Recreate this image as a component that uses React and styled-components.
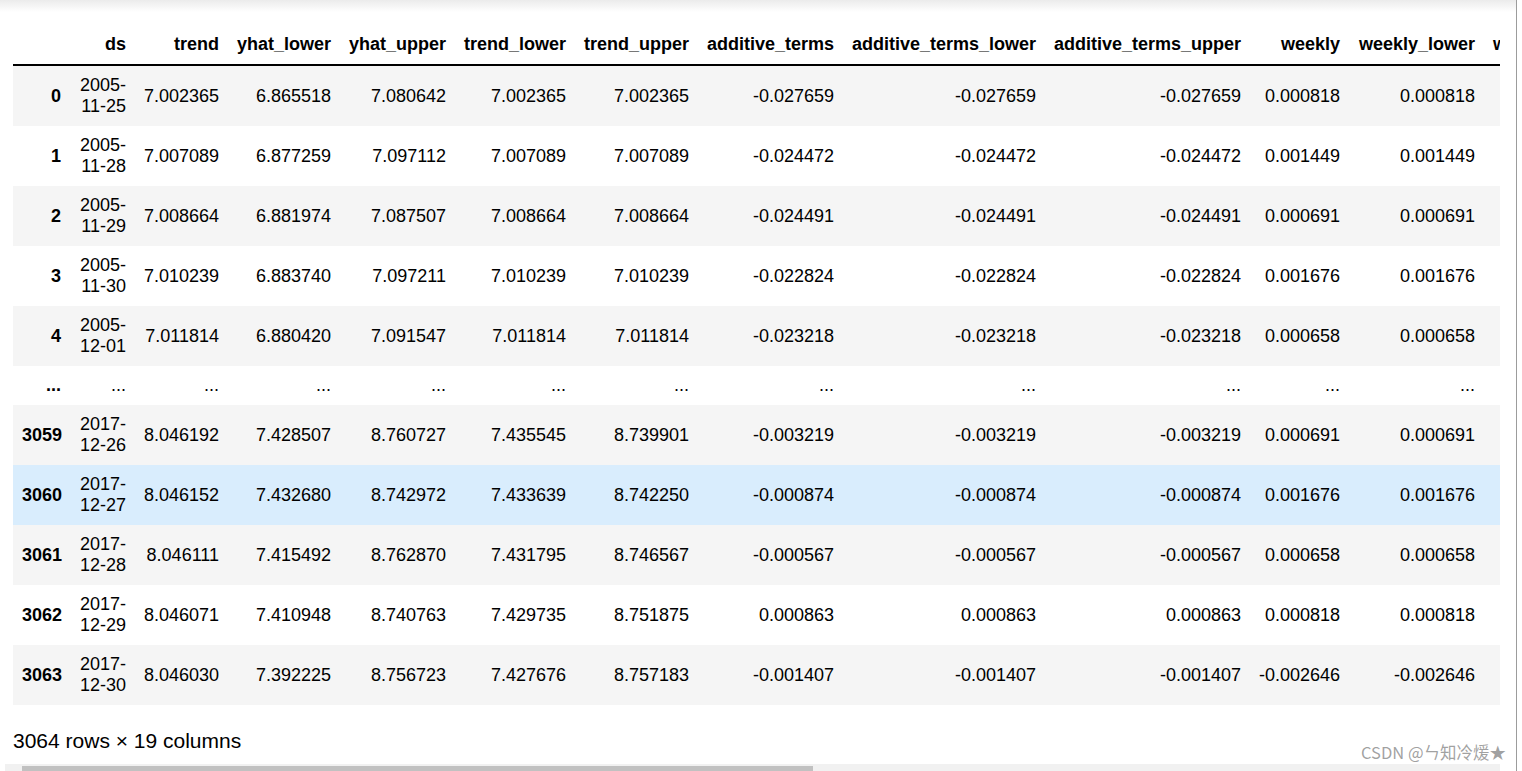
import React from 'react';
import styled, { createGlobalStyle } from 'styled-components';

const GlobalStyle = createGlobalStyle`
  html, body {
    margin: 0;
    padding: 0;
    background: #fff;
  }
  body {
    font-family: "Liberation Sans", Arial, sans-serif;
    color: #000;
    overflow: hidden;
  }
`;

const columns = [
  { name: 'ds', width: 65 },
  { name: 'trend', width: 93 },
  { name: 'yhat_lower', width: 112 },
  { name: 'yhat_upper', width: 115 },
  { name: 'trend_lower', width: 120 },
  { name: 'trend_upper', width: 123 },
  { name: 'additive_terms', width: 145 },
  { name: 'additive_terms_lower', width: 202 },
  { name: 'additive_terms_upper', width: 205 },
  { name: 'weekly', width: 99 },
  { name: 'weekly_lower', width: 135 },
  { name: 'weekly_upper', width: 136 },
];

// [index, ds, trend, yhat_lower, yhat_upper, trend_lower, trend_upper, additive, weekly]
const raw = [
  ['0', '2005-11-25', '7.002365', '6.865518', '7.080642', '7.002365', '7.002365', '-0.027659', '0.000818'],
  ['1', '2005-11-28', '7.007089', '6.877259', '7.097112', '7.007089', '7.007089', '-0.024472', '0.001449'],
  ['2', '2005-11-29', '7.008664', '6.881974', '7.087507', '7.008664', '7.008664', '-0.024491', '0.000691'],
  ['3', '2005-11-30', '7.010239', '6.883740', '7.097211', '7.010239', '7.010239', '-0.022824', '0.001676'],
  ['4', '2005-12-01', '7.011814', '6.880420', '7.091547', '7.011814', '7.011814', '-0.023218', '0.000658'],
  null,
  ['3059', '2017-12-26', '8.046192', '7.428507', '8.760727', '7.435545', '8.739901', '-0.003219', '0.000691'],
  ['3060', '2017-12-27', '8.046152', '7.432680', '8.742972', '7.433639', '8.742250', '-0.000874', '0.001676'],
  ['3061', '2017-12-28', '8.046111', '7.415492', '8.762870', '7.431795', '8.746567', '-0.000567', '0.000658'],
  ['3062', '2017-12-29', '8.046071', '7.410948', '8.740763', '7.429735', '8.751875', '0.000863', '0.000818'],
  ['3063', '2017-12-30', '8.046030', '7.392225', '8.756723', '7.427676', '8.757183', '-0.001407', '-0.002646'],
];

const toCells = (r) => {
  const [, ds, trend, lo, up, tlo, tup, add, wk] = r;
  return [ds, trend, lo, up, tlo, tup, add, add, add, wk, wk, wk];
};

const Frame = styled.div`
  display: flex;
  height: 771px;
  overflow: hidden;
`;

const Main = styled.div`
  width: 1516px;
  flex: none;
  padding: 25px 0 0 5px;
  box-sizing: border-box;
  background: linear-gradient(#ebebeb 0px, #fff 12px);
`;

const Edge = styled.div`
  flex: 1;
  border-left: 1px solid #9c9c9c;
  background: #fff;
`;

const Scroller = styled.div`
  width: 1495px;
  overflow: hidden;
`;

const Content = styled.div`
  padding-left: 8px;
`;

const Table = styled.table`
  table-layout: fixed;
  border-collapse: collapse;
  border-spacing: 0;
  font-size: 18px;
  line-height: 21px;
  width: 1607px;
`;

const Th = styled.th`
  text-align: right;
  vertical-align: middle;
  padding: 9px;
  font-weight: bold;
  white-space: normal;
  border: none;
`;

const HeadRow = styled.tr`
  border-bottom: 2px solid #000;
`;

const Row = styled.tr`
  background: ${({ $hover, $odd }) => ($hover ? '#d9edfd' : $odd ? '#fff' : '#f5f5f5')};
`;

const Td = styled.td`
  text-align: right;
  vertical-align: middle;
  padding: 9px;
  white-space: normal;
  border: none;
`;

const Summary = styled.p`
  margin: 24px 0 11px;
  font-size: 21px;
  line-height: 24px;
`;

const ScrollBar = styled.div`
  display: flex;
  height: 17px;
  background: #f1f1f1;
`;

const ArrowButton = styled.div`
  width: 17px;
  flex: none;
  display: flex;
  justify-content: center;
  padding-top: 7px;
  box-sizing: border-box;
`;

const Thumb = styled.div`
  width: 791px;
  margin-top: 2px;
  height: 13px;
  background: #c1c1c1;
`;

const Watermark = styled.div`
  position: absolute;
  right: 16px;
  top: 741px;
  font-family: "Noto Sans CJK SC", sans-serif;
  font-size: 16.5px;
  line-height: 22px;
  color: rgba(130, 130, 130, 0.75);
`;

export default function App() {
  return (
    <>
      <GlobalStyle />
      <Frame>
        <Main>
          <Scroller>
            <Content>
              <Table>
                <colgroup>
                  <col style={{ width: 57 }} />
                  {columns.map((c) => (
                    <col key={c.name} style={{ width: c.width }} />
                  ))}
                </colgroup>
                <thead>
                  <HeadRow>
                    <Th />
                    {columns.map((c) => (
                      <Th key={c.name}>{c.name}</Th>
                    ))}
                  </HeadRow>
                </thead>
                <tbody>
                  {raw.map((r, i) =>
                    r ? (
                      <Row key={i} $odd={i % 2 === 1} $hover={r[0] === '3060'}>
                        <Th>{r[0]}</Th>
                        {toCells(r).map((v, j) => (
                          <Td key={j}>{v}</Td>
                        ))}
                      </Row>
                    ) : (
                      <Row key={i} $odd>
                        <Th>...</Th>
                        {columns.map((c) => (
                          <Td key={c.name}>...</Td>
                        ))}
                      </Row>
                    )
                  )}
                </tbody>
              </Table>
              <Summary>3064 rows × 19 columns</Summary>
            </Content>
            <ScrollBar>
              <ArrowButton>
                <svg width="7" height="4" viewBox="0 0 7 4">
                  <path d="M0 4 L3.5 0 L7 4 Z" fill="#a3a3a3" />
                </svg>
              </ArrowButton>
              <Thumb />
            </ScrollBar>
          </Scroller>
        </Main>
        <Edge />
      </Frame>
      <Watermark>CSDN @ㄣ知冷煖★</Watermark>
    </>
  );
}
